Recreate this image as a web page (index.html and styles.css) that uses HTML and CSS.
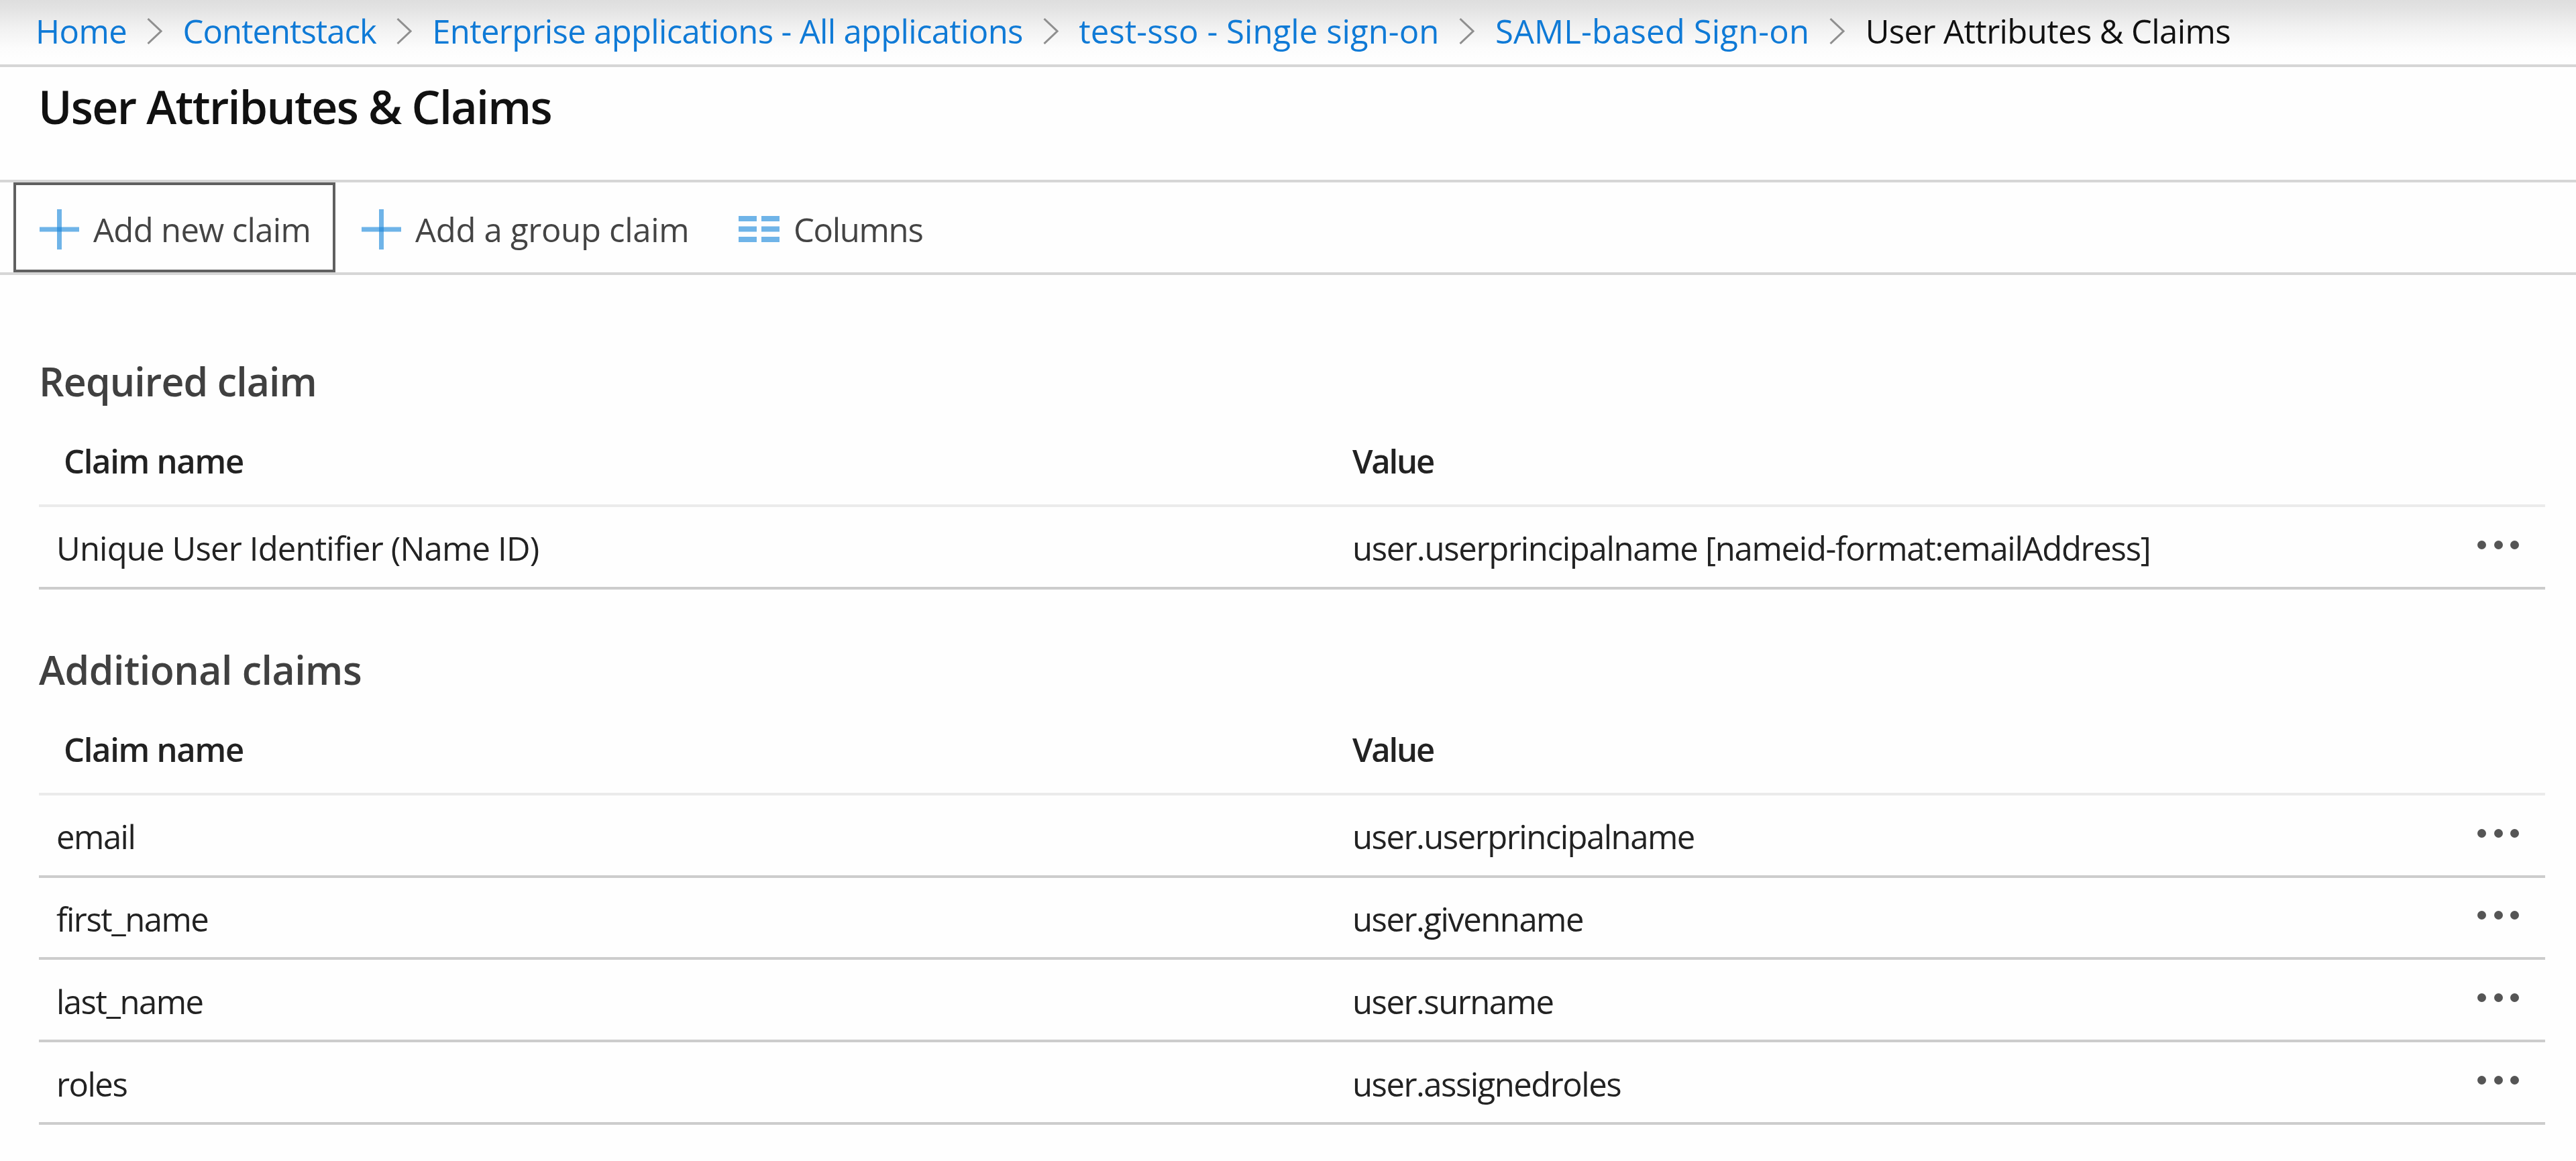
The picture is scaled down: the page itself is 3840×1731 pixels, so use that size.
FILE: index.html
```html
<!DOCTYPE html>
<html lang="en">
<head>
    <meta charset="UTF-8">
    <meta name="viewport" content="width=device-width, initial-scale=1.0">
    <title>User Attributes &amp; Claims</title>

    <link rel="stylesheet" href="styles.css">
</head>
<body>
    <nav class="breadcrumb">
        <a class="crumb crumb-home">Home</a>
        <svg class="chevron" viewBox="0 0 23 39"><path d="M1.5 1 L21 19.5 L1.5 38"/></svg>
        <a class="crumb crumb-tenant">Contentstack</a>
        <svg class="chevron" viewBox="0 0 23 39"><path d="M1.5 1 L21 19.5 L1.5 38"/></svg>
        <a class="crumb crumb-apps">Enterprise applications - All applications</a>
        <svg class="chevron" viewBox="0 0 23 39"><path d="M1.5 1 L21 19.5 L1.5 38"/></svg>
        <a class="crumb crumb-sso">test-sso - Single sign-on</a>
        <svg class="chevron" viewBox="0 0 23 39"><path d="M1.5 1 L21 19.5 L1.5 38"/></svg>
        <a class="crumb crumb-saml">SAML-based Sign-on</a>
        <svg class="chevron" viewBox="0 0 23 39"><path d="M1.5 1 L21 19.5 L1.5 38"/></svg>
        <span class="crumb crumb-current">User Attributes &amp; Claims</span>
    </nav>

    <header class="title-bar">
        <h1 class="title">User Attributes &amp; Claims</h1>
    </header>

    <div class="toolbar">
        <button type="button" class="tool tool-new focused">
            <svg class="icon-plus" viewBox="0 0 59 60">
                <path d="M0 30 H59 M29.5 0 V60"/>
                <rect x="26" y="26.5" width="7" height="7"/>
            </svg>
            <span>Add new claim</span>
        </button>
        <button type="button" class="tool tool-group">
            <svg class="icon-plus" viewBox="0 0 59 60">
                <path d="M0 30 H59 M29.5 0 V60"/>
                <rect x="26" y="26.5" width="7" height="7"/>
            </svg>
            <span>Add a group claim</span>
        </button>
        <button type="button" class="tool tool-columns">
            <svg class="icon-columns" viewBox="0 0 61 39">
                <path d="M0 4 H27 M34 4 H61 M0 19.5 H27 M34 19.5 H61 M0 35 H27 M34 35 H61"/>
            </svg>
            <span>Columns</span>
        </button>
    </div>

    <main class="content">
        <section class="claims">
            <h2 class="section-title title-required">Required claim</h2>
            <div class="row head">
                <div class="name">Claim name</div>
                <div class="value">Value</div>
            </div>
            <div class="row">
                <div class="name long">Unique User Identifier (Name ID)</div>
                <div class="value long">user.userprincipalname [nameid-format:emailAddress]</div>
                <div class="more"><i></i><i></i><i></i></div>
            </div>
        </section>

        <section class="claims">
            <h2 class="section-title">Additional claims</h2>
            <div class="row head">
                <div class="name">Claim name</div>
                <div class="value">Value</div>
            </div>
            <div class="row">
                <div class="name">email</div>
                <div class="value">user.userprincipalname</div>
                <div class="more"><i></i><i></i><i></i></div>
            </div>
            <div class="row">
                <div class="name">first_name</div>
                <div class="value">user.givenname</div>
                <div class="more"><i></i><i></i><i></i></div>
            </div>
            <div class="row">
                <div class="name">last_name</div>
                <div class="value">user.surname</div>
                <div class="more"><i></i><i></i><i></i></div>
            </div>
            <div class="row">
                <div class="name">roles</div>
                <div class="value">user.assignedroles</div>
                <div class="more"><i></i><i></i><i></i></div>
            </div>
        </section>
    </main>
</body>
</html>
```
FILE: styles.css
```css
* {
    box-sizing: border-box;
}

body {
    margin: 0;
    font-family: "Open Sans", "Noto Sans", sans-serif;
    font-size: 49px;
    color: #222222;
    background-color: #fefefe;
    white-space: nowrap;
}

h1,
h2 {
    margin: 0;
    font-weight: 600;
}

/* breadcrumb */

.breadcrumb {
    display: flex;
    align-items: center;
    height: 100px;
    padding: 0 0 4px 53px;
    border-bottom: 4px solid #d6d6d6;
    background: linear-gradient(#dedede 0, #e3e3e3 14px, #f2f2f2 44px, #fcfcfc 72px, #fefefe 88px);
}

.crumb {
    line-height: 92px;
    color: #0f7ad6;
}

.crumb-home {
    letter-spacing: -0.6px;
}

.crumb-tenant {
    letter-spacing: -1px;
}

.crumb-apps {
    letter-spacing: -0.67px;
}

.crumb-sso {
    letter-spacing: 0.08px;
}

.crumb-saml {
    letter-spacing: 0.17px;
}

.crumb-current {
    letter-spacing: -0.6px;
    color: #111111;
}

.chevron {
    width: 23px;
    height: 39px;
    margin: 0 30.5px 0 30px;
    fill: none;
    stroke: #8f8f8f;
    stroke-width: 3;
}

/* title */

.title-bar {
    height: 172px;
    padding-left: 57px;
    border-bottom: 4px solid #d6d6d6;
}

.title {
    font-size: 68px;
    line-height: 117px;
    letter-spacing: -1.7px;
    color: #111111;
}

/* toolbar */

.toolbar {
    display: flex;
    height: 138px;
    padding-left: 20px;
    border-bottom: 4px solid #d6d6d6;
}

.tool {
    display: flex;
    align-items: center;
    gap: 21px;
    padding: 5px 0 0 35px;
    border: 4px solid transparent;
    background: none;
    font: inherit;
    color: #444444;
}

.tool.focused {
    border-color: #606060;
}

.tool-new {
    width: 480px;
    letter-spacing: -0.65px;
}

.tool-group {
    width: 562px;
    letter-spacing: -0.29px;
}

.tool-columns {
    gap: 21px;
    letter-spacing: -1.3px;
}

.icon-plus {
    width: 59px;
    height: 60px;
    fill: #3a96dd;
    stroke: #6fb4e8;
    stroke-width: 7;
}

.icon-plus rect {
    stroke: none;
}

.icon-columns {
    width: 61px;
    height: 39px;
    stroke: #6fb4e8;
    stroke-width: 8;
}

/* claims */

.content {
    padding: 118px 46px 0 58px;
}

.claims {
    margin-bottom: 79px;
}

.section-title {
    font-size: 59px;
    line-height: 80px;
    letter-spacing: -0.5px;
    color: #404040;
}

.title-required {
    letter-spacing: -0.9px;
}

.row {
    display: grid;
    grid-template-columns: 1958px 1677px 62px;
    align-items: center;
    height: 122.8px;
    padding: 4px 0 0 0;
    border-bottom: 4px solid #cccccc;
    letter-spacing: -1.5px;
}

.row .name {
    padding-left: 26px;
}

.row .long {
    letter-spacing: -0.83px;
}

.row .value.long {
    letter-spacing: -1.28px;
}

.row.head {
    height: 148px;
    padding-top: 14px;
    border-bottom-color: #ebebeb;
    font-weight: 600;
    letter-spacing: -1.3px;
}

.row.head .name {
    padding-left: 37px;
}

.row.head .value {
    letter-spacing: -2.2px;
}

.more {
    display: flex;
    justify-content: space-between;
    margin-bottom: 10px;
}

.more i {
    width: 13px;
    height: 13px;
    border-radius: 50%;
    background-color: #555555;
}
```
